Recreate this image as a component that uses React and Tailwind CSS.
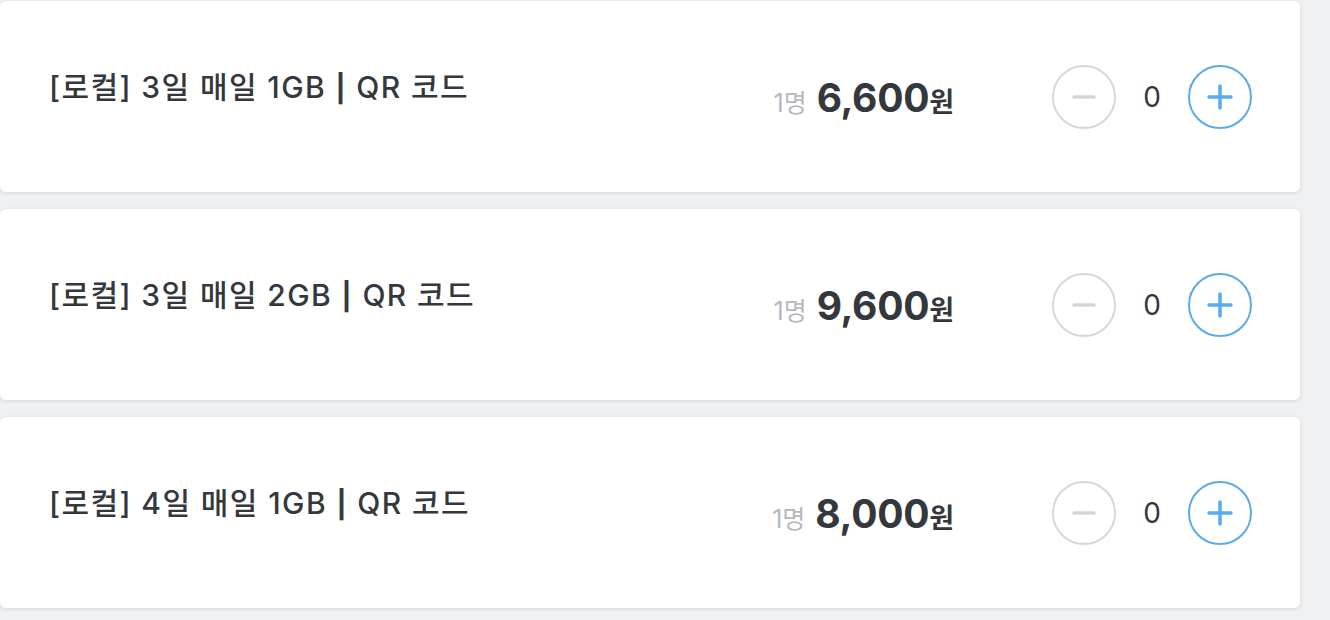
import React from "react";

const items = [
  { pre: "[로컬] 3일 매일 1GB", price: "6,600" },
  { pre: "[로컬] 3일 매일 2GB", price: "9,600" },
  { pre: "[로컬] 4일 매일 1GB", price: "8,000" },
];

const font = { fontFamily: 'Inter, "Noto Sans CJK KR", sans-serif' };

function Card({ pre, price }) {
  return (
    <div className="h-[191px] bg-white rounded-[6px] shadow-[0_1px_4px_rgba(0,0,0,0.13)] flex items-center pl-[49px] pr-[48px]">
      <div className="flex-1 pb-[18px] text-[30px] font-medium text-[#34383d] tracking-[1.4px] whitespace-nowrap">
        {pre} <span className="font-bold text-[27px]">|</span> QR 코드
      </div>
      <div className="flex items-baseline mr-[98px] pt-[4px]">
        <span className="text-[25px] text-[#b4b9bf] mr-[10px]">1명</span>
        <span className="text-[39px] font-bold text-[#34383d] tracking-[-0.3px]">{price}</span>
        <span className="text-[27px] font-bold text-[#34383d]">원</span>
      </div>
      <div className="flex items-center">
        <button className="w-[64px] h-[64px] rounded-full border-2 border-[#d4d8dd] flex items-center justify-center">
          <svg width="26" height="26" viewBox="0 0 26 26">
            <line x1="3" y1="13" x2="23" y2="13" stroke="#d1d5db" strokeWidth="3.5" strokeLinecap="round" />
          </svg>
        </button>
        <span className="w-[72px] text-center text-[28px] text-[#34383d]">0</span>
        <button className="w-[64px] h-[64px] rounded-full border-2 border-[#5aabee] flex items-center justify-center">
          <svg width="26" height="26" viewBox="0 0 26 26">
            <line x1="2" y1="13" x2="24" y2="13" stroke="#5aabee" strokeWidth="3.5" strokeLinecap="round" />
            <line x1="13" y1="2" x2="13" y2="24" stroke="#5aabee" strokeWidth="3.5" strokeLinecap="round" />
          </svg>
        </button>
      </div>
    </div>
  );
}

export default function App() {
  return (
    <div className="w-[1330px] h-[620px] bg-[#f0f1f3] pt-[1px] pr-[30px] flex flex-col gap-[17px] overflow-hidden" style={font}>
      {items.map((it) => (
        <Card key={it.price} {...it} />
      ))}
    </div>
  );
}
